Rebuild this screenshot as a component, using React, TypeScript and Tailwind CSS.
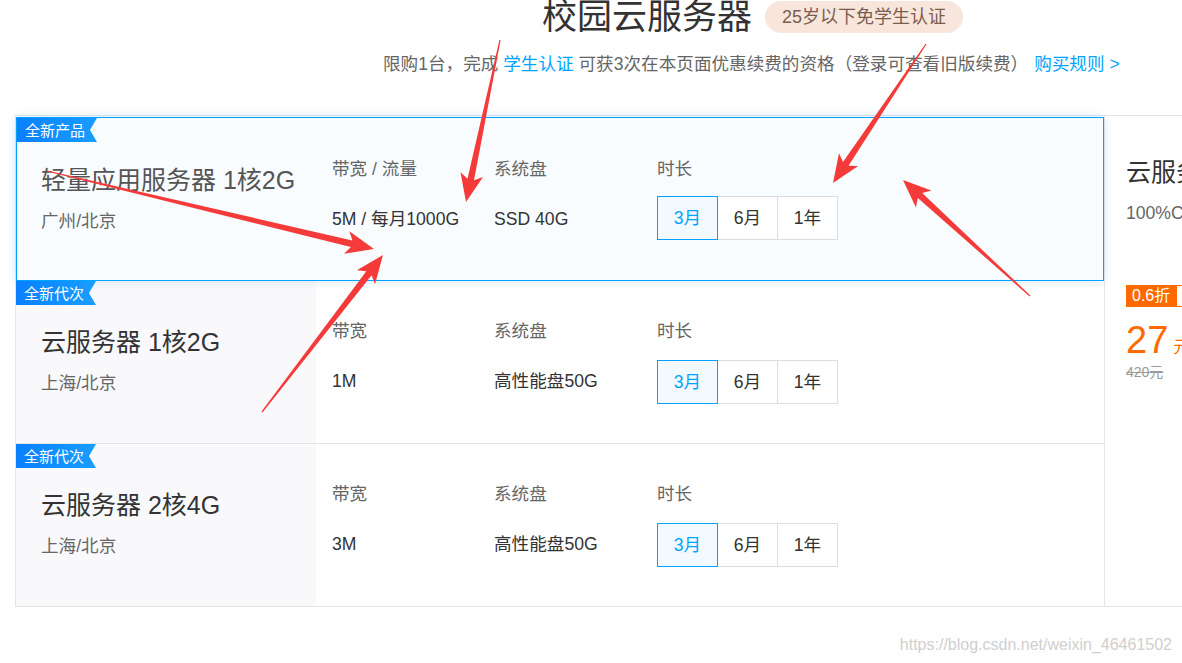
import React from "react";

type Plan = {
  tag: string;
  name: string;
  region: string;
  bwLabel: string;
  bw: string;
  disk: string;
  featured?: boolean;
};

const plans: Plan[] = [
  { tag: "全新产品", name: "轻量应用服务器 1核2G", region: "广州/北京", bwLabel: "带宽 / 流量", bw: "5M / 每月1000G", disk: "SSD 40G", featured: true },
  { tag: "全新代次", name: "云服务器 1核2G", region: "上海/北京", bwLabel: "带宽", bw: "1M", disk: "高性能盘50G" },
  { tag: "全新代次", name: "云服务器 2核4G", region: "上海/北京", bwLabel: "带宽", bw: "3M", disk: "高性能盘50G" },
];

// Red callout arrows drawn over the page
const arrows: [number, number, number, number][] = [
  [47, 171, 374, 249],
  [262, 412, 383, 255],
  [500, 40, 466, 202],
  [926, 44, 833, 183],
  [1030, 296, 903, 180],
];

function arrowPolygon(sx: number, sy: number, tx: number, ty: number): string {
  const dx = tx - sx;
  const dy = ty - sy;
  const len = Math.hypot(dx, dy);
  const ux = dx / len;
  const uy = dy / len;
  const nx = -uy;
  const ny = ux;
  const head = 23;
  const wing = 11.5;
  const tail = 0.6;
  const neck = 3.3;
  const back = 5;
  const bx = tx - ux * head;
  const by = ty - uy * head;
  const wx = tx - ux * (head + back);
  const wy = ty - uy * (head + back);
  const pts = [
    [sx + nx * tail, sy + ny * tail],
    [bx + nx * neck, by + ny * neck],
    [wx + nx * wing, wy + ny * wing],
    [tx, ty],
    [wx - nx * wing, wy - ny * wing],
    [bx - nx * neck, by - ny * neck],
    [sx - nx * tail, sy - ny * tail],
  ];
  return pts.map((p) => `${p[0].toFixed(1)},${p[1].toFixed(1)}`).join(" ");
}

function Tag({ text }: { text: string }) {
  return (
    <div className="absolute left-0 top-0 z-20 flex h-[24px] w-[80px] items-center bg-gradient-to-r from-[#0a80ff] to-[#1a9dff] pl-[8px] text-[15px] leading-none text-white [clip-path:polygon(0_0,100%_0,calc(100%_-_7px)_50%,100%_100%,0_100%)]">
      {text}
    </div>
  );
}

function Durations({ featured }: { featured?: boolean }) {
  const items = ["3月", "6月", "1年"];
  return (
    <div className={featured ? "mt-[15px] flex" : "mt-[17px] flex"}>
      {items.map((d, i) => (
        <div
          key={d}
          className={
            i === 0
              ? "relative z-10 flex h-[44px] w-[61px] items-center justify-center border border-[#00a4ff] bg-[#f3faff] text-[#00a4ff]"
              : "-ml-px flex h-[44px] w-[61px] items-center justify-center border border-[#dddddd] bg-white text-[#333]"
          }
        >
          {d}
        </div>
      ))}
    </div>
  );
}

function PlanRow({ plan, index }: { plan: Plan; index: number }) {
  const rowClass = plan.featured
    ? "relative z-10 mt-px flex h-[164px] border border-[#00a4ff] bg-[#f8fcff] shadow-[0_0_10px_rgba(0,140,255,0.18)]"
    : index === 1
    ? "relative flex h-[163px] border-b border-[#e5e5e5] bg-white"
    : "relative flex h-[162px] bg-white";
  const colPad = plan.featured ? "pt-[39px]" : "pt-[38px]";
  return (
    <div className={rowClass}>
      <Tag text={plan.tag} />
      <div className={plan.featured ? "w-[299px] pl-[24px] pt-[46px]" : "w-[300px] bg-[#f9f9fb] pl-[25px] pt-[45px]"}>
        <div className={plan.featured ? "text-[25px] leading-[32px] text-[#555]" : "text-[25px] leading-[32px] text-[#333]"}>
          {plan.name}
        </div>
        <div className="mt-[13px] text-[17.6px] leading-[24px] text-[#666]">{plan.region}</div>
      </div>
      <div className={`w-[162px] pl-[16px] ${colPad}`}>
        <div className="text-[17.6px] leading-[24px] text-[#666]">{plan.bwLabel}</div>
        <div className="mt-[26px] whitespace-nowrap text-[17.6px] leading-[24px] text-[#333]">{plan.bw}</div>
      </div>
      <div className={`w-[163px] pl-[16px] ${colPad}`}>
        <div className="text-[17.6px] leading-[24px] text-[#666]">系统盘</div>
        <div className="mt-[26px] whitespace-nowrap text-[17.6px] leading-[24px] text-[#333]">{plan.disk}</div>
      </div>
      <div className={`flex-1 pl-[16px] text-[17.6px] leading-[24px] ${colPad}`}>
        <div className="text-[#666]">时长</div>
        <Durations featured={plan.featured} />
      </div>
    </div>
  );
}

export default function App() {
  return (
    <div className="relative h-[663px] w-[1182px] overflow-hidden bg-white [font-family:'Liberation_Sans','Noto_Sans_CJK_SC',sans-serif]">
      <header>
        <div className="-mt-[2px] flex h-[38px] items-center pl-[542px]">
          <h1 className="text-[35px] leading-[38px] text-[#333]">校园云服务器</h1>
          <span className="ml-[13px] flex h-[32px] items-center rounded-[16px] bg-[#f8e6dc] px-[17px] text-[18px] text-[#7b5d4f]">
            25岁以下免学生认证
          </span>
        </div>
        <p className="mt-[16px] whitespace-nowrap pl-[383px] text-[17.6px] leading-[24px] text-[#666]">
          限购1台，完成 <span className="text-[#00a4ff]">学生认证</span> 可获3次在本页面优惠续费的资格（登录可查看旧版续费）
          <span className="ml-[6px] text-[#00a4ff]">购买规则 &gt;</span>
        </p>
      </header>

      <div className="ml-[15px] mt-[39px] flex w-[1500px] border-y border-l border-[#e5e5e5]">
        <div className="w-[1089px] border-r border-[#e5e5e5]">
          {plans.map((p, i) => (
            <PlanRow key={p.name} plan={p} index={i} />
          ))}
        </div>
        <div className="w-[400px] pl-[21px] pt-[40px]">
          <div className="whitespace-nowrap text-[25px] leading-[32px] text-[#333]">云服务器 新客专享</div>
          <div className="mt-[13px] whitespace-nowrap text-[17.6px] leading-[24px] text-[#666]">100%CPU性能保障</div>
          <div className="mt-[60px] flex h-[22px] items-stretch">
            <span className="flex items-center bg-[#ff6a00] px-[6px] text-[16px] text-white">0.6折</span>
            <span className="flex items-center border border-[#ff6a00] pl-[14px] pr-[6px] text-[14px] text-[#ff6a00]">限时特惠</span>
          </div>
          <div className="mt-[11px] flex items-baseline text-[#ff6a00]">
            <span className="text-[38px] leading-[44px]">27</span>
            <span className="ml-[5px] text-[17px]">元</span>
          </div>
          <div className="text-[14px] leading-[20px] text-[#999] line-through">420元</div>
        </div>
      </div>

      <div className="absolute right-[10px] top-[634px] text-[16px] leading-[22px] text-[#cfcfcf]">
        https://blog.csdn.net/weixin_46461502
      </div>

      <svg className="pointer-events-none absolute left-0 top-0 z-30" width="1182" height="663" viewBox="0 0 1182 663">
        {arrows.map((a, i) => (
          <polygon key={i} points={arrowPolygon(a[0], a[1], a[2], a[3])} fill="#f53a3a" />
        ))}
      </svg>
    </div>
  );
}
